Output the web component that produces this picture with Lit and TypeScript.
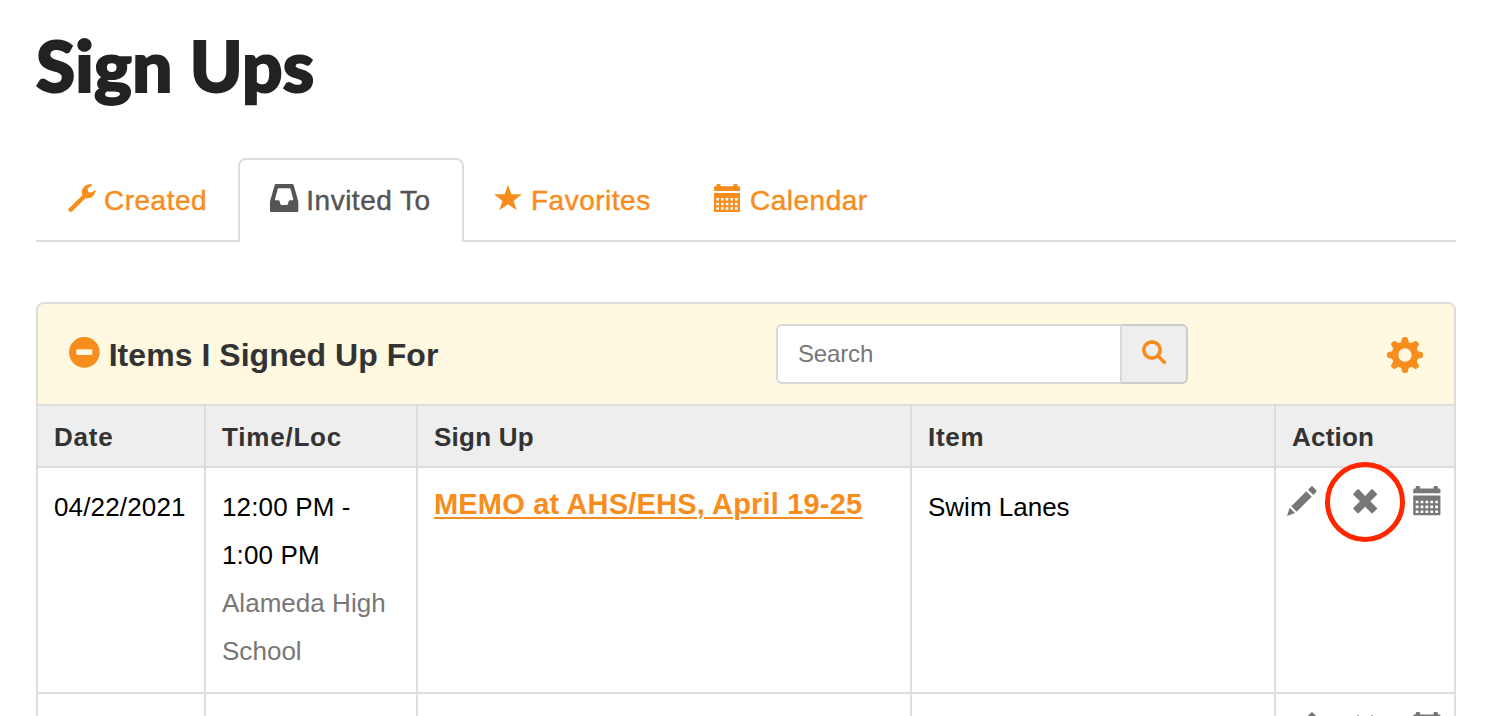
import { LitElement, html, css, svg } from "lit";
import { customElement } from "lit/decorators.js";

const wrench = html`<svg class="wrench" viewBox="0 0 84 84"><path d="M1 75 L43 34 Q38 20 47 10 Q56 0 69 0 Q74 1 71 5 L62 11 Q58 13 59 17 L62 25 Q69 27 73 24 L80 19 Q84 17 83 22 Q80 34 72 39 Q62 45 53 42 L13 82 Q9 86 4 82 Q-2 78 1 75Z"/></svg>`;
const inbox = html`<svg class="inbox" viewBox="0 0 85 84"><path fill-rule="evenodd" d="M18 0H67Q70 0 71 3L84 49Q85 52 85 55V81Q85 84 82 84H3Q0 84 0 81V55Q0 52 1 49L14 3Q15 0 18 0ZM26 13Q24 13 23 16L15 46Q14 49 17 49H25Q28 49 29 52L31 60Q32 63 35 63H50Q53 63 54 60L56 52Q57 49 60 49H68Q71 49 70 46L62 16Q61 13 59 13Z"/></svg>`;
const star = html`<svg class="star" viewBox="0 0 84 76"><path d="M42 0L52 28H84L59 47L68 76L42 58L16 76L25 47L0 28H32Z"/></svg>`;
const cells = [42, 56, 70].flatMap((y) => [7, 21, 35, 49, 63].map((x) => `M${x} ${y}v7.5h8v-7.5z`)).join("");
const calendar = (cls: string) => html`<svg class=${cls} viewBox="0 0 78 84"><path d="M0 21V11Q0 7 4 7H7V4Q7 0 11 0H16Q20 0 20 4V7H58V4Q58 0 62 0H67Q71 0 71 4V7H74Q78 7 78 11V21Z"/><path fill-rule="evenodd" d=${`M0 27H78V81Q78 84 75 84H3Q0 84 0 81Z${cells}`}/></svg>`;
const minus = html`<svg class="minus" viewBox="0 0 92 92"><path fill-rule="evenodd" d="M46 0A46 46 0 1 1 46 92A46 46 0 1 1 46 0ZM24 37Q22 37 22 39V52Q22 54 24 54H68Q70 54 70 52V39Q70 37 68 37Z"/></svg>`;
const magnifier = html`<svg class="magnifier" viewBox="0 0 73 73"><circle cx="30" cy="30" r="24.5"/><path d="M49 49L67 67"/></svg>`;
const teeth = [0, 45, 90, 135, 180, 225, 270, 315].map(
  (a) => svg`<path transform=${`rotate(${a} 54 54)`} d="M37 24Q44 16 46 3Q46 0 54 0Q62 0 62 3Q64 16 71 24Z"/>`
);
const gear = html`<svg class="gear" viewBox="0 0 108 108"><path fill-rule="evenodd" d="M54 14A40 40 0 1 1 54 94A40 40 0 1 1 54 14ZM54 34A20 20 0 1 0 54 74A20 20 0 1 0 54 34Z"/>${teeth}</svg>`;
const pencil = html`<svg class="pencil" viewBox="0 0 89 90"><path d="M0 90L8 65L24 81ZM13 61L58 16L74 32L29 77ZM63 11L71 3Q74 -1 78 2L87 12Q90 16 87 19L79 27Z"/></svg>`;
const cross = html`<svg class="cross" viewBox="0 0 73 74"><path d="M1 14L14 1Q15.500 0 17 1L36.500 21L56 1Q57.500 0 59 1L72 14Q73 16 72 17L52 37L72 57Q73 59 72 60L59 73Q57.500 74 56 73L36.500 53L17 73Q15.500 74 14 73L1 60Q0 58 1 57L21 37L1 17Q0 15 1 14Z"/></svg>`;

interface Row {
  date: string;
  time: string;
  place: string;
  signUp: string;
  item: string;
  marked: boolean;
}

@customElement("app-root")
export class AppRoot extends LitElement {
  rows: Row[] = [
    { date: "04/22/2021", time: "12:00 PM - 1:00 PM", place: "Alameda High School", signUp: "MEMO at AHS/EHS, April 19-25", item: "Swim Lanes", marked: true },
    { date: "", time: "", place: "", signUp: "", item: "", marked: false },
  ];

  static styles = css`
    :host { display: block; height: 716px; overflow: hidden; background: #fff; color: #000; font-family: "Liberation Sans", Arial, sans-serif; }
    * { box-sizing: border-box; }
    svg { display: block; flex: none; fill: currentColor; overflow: visible; }
    .page { padding: 0 30px 0 36px; }
    h1 { margin: 0; height: 158px; padding-top: 20px; font: 900 71px/90px Lato, sans-serif; letter-spacing: .3px; color: #222; white-space: nowrap; -webkit-text-stroke: 2px #222; }
    .tabs { display: flex; height: 84px; border-bottom: 2px solid #ddd; }
    .tab { display: flex; height: 84px; padding-top: 26px; color: #f78d1d; font-size: 28px; line-height: 34px; letter-spacing: .5px; white-space: nowrap; -webkit-text-stroke: .45px currentColor; }
    .tab svg { stroke: none; }
    .created { width: 202px; padding-left: 32px; gap: 8px; }
    .invited { width: 226px; padding: 24px 0 0 30px; gap: 8px; color: #555; background: #fff; border: 2px solid #ddd; border-bottom: 0; border-radius: 8px 8px 0 0; }
    .favorites { width: 218px; padding-left: 30px; gap: 9px; }
    .calendar { padding-left: 32px; gap: 10px; }
    .wrench { width: 28px; height: 28px; }
    .inbox { width: 28.300px; height: 28px; }
    .star { width: 28px; height: 25.300px; margin-top: 1px; }
    .cal { width: 26px; height: 28px; }
    .panel { margin-top: 60px; border: 2px solid #ddd; border-radius: 8px 8px 0 0; overflow: hidden; }
    .bar { display: grid; grid-template-columns: 738px 412px 1fr; height: 100px; background: #fef9e0; color: #f78d1d; }
    .heading { display: flex; padding: 32.500px 0 0 31px; gap: 9px; }
    .minus { width: 30.700px; height: 30.700px; }
    h2 { margin: 0; font-size: 32px; line-height: 37px; letter-spacing: .04px; color: #333; white-space: nowrap; }
    .search { display: flex; margin-top: 20px; width: 412px; height: 60px; }
    .field { width: 344px; padding: 0 20px; border: 2px solid #d9d9dd; border-right: 0; border-radius: 6px 0 0 6px; background: #fff; color: #777; font-size: 24px; line-height: 56px; letter-spacing: -.15px; }
    .go { width: 68px; padding: 14px 0 0 20px; border: 2px solid #ccc; border-left-color: #d9d9dd; border-radius: 0 6px 6px 0; background: #eee; }
    .magnifier { width: 24.300px; height: 24.300px; fill: none; stroke: currentColor; stroke-width: 11; stroke-linecap: round; }
    .options { display: flex; justify-content: flex-end; padding: 33.300px 30.800px 0 0; }
    .gear { width: 36px; height: 36px; }
    .row { display: grid; grid-template-columns: 166px 212px 494px 364px 180px; height: 226px; border-top: 2px solid #ddd; }
    .cell { padding: 15px 16px 17px; border-left: 2px solid #ddd; font-size: 26px; line-height: 48px; letter-spacing: .15px; }
    .cell:first-child { border-left: 0; white-space: nowrap; }
    .head { height: 62px; background: #eee; color: #333; }
    .head .cell { padding: 1px 16px 0; line-height: 60px; font-weight: 700; letter-spacing: .4px; }
    .head .cell:first-child { letter-spacing: .8px; }
    .head .cell:nth-child(2) { letter-spacing: .8px; }
    .head .cell:nth-child(4) { letter-spacing: .7px; }
    .head .cell:nth-child(3) { letter-spacing: .25px; }
    .head .cell:nth-child(5) { letter-spacing: .2px; }
    .cell:nth-child(4) { letter-spacing: 0; }
    .place { color: #777; letter-spacing: .03px; }
    .link { color: #f78d1d; font-size: 29px; font-weight: 700; line-height: 42px; letter-spacing: .18px; text-decoration: underline; text-decoration-thickness: 2px; text-underline-offset: 3px; white-space: nowrap; }
    .link-cell { padding-top: 13px; }
    .cell.actions { position: relative; display: flex; padding: 18px 0 0 11px; color: #777; }
    .pencil { width: 29.700px; height: 30px; }
    .cross { width: 24.300px; height: 24.700px; margin: 2.500px 0 0 36px; }
    .cal-row { width: 27.700px; height: 29.300px; margin-left: 36px; }
    .ring { position: absolute; left: 49.300px; top: -6.500px; width: 80px; height: 80px; border: 5px solid #ff2600; border-radius: 50%; }
  `;

  render() {
    return html`<main class="page">
      <h1>Sign Ups</h1>
      <nav class="tabs">
        <a class="tab created">${wrench}<span>Created</span></a>
        <a class="tab invited">${inbox}<span>Invited To</span></a>
        <a class="tab favorites">${star}<span>Favorites</span></a>
        <a class="tab calendar">${calendar("cal")}<span>Calendar</span></a>
      </nav>
      <section class="panel">
        <header class="bar">
          <div class="heading">${minus}<h2>Items I Signed Up For</h2></div>
          <div class="search"><div class="field">Search</div><div class="go">${magnifier}</div></div>
          <div class="options">${gear}</div>
        </header>
        <div class="row head">
          ${["Date", "Time/Loc", "Sign Up", "Item", "Action"].map((t) => html`<div class="cell">${t}</div>`)}
        </div>
        ${this.rows.map((r) => html`<div class="row">
          <div class="cell">${r.date}</div>
          <div class="cell"><div>${r.time}</div><div class="place">${r.place}</div></div>
          <div class="cell link-cell"><a class="link">${r.signUp}</a></div>
          <div class="cell">${r.item}</div>
          <div class="cell actions">${pencil}${cross}${calendar("cal-row")}${r.marked ? html`<span class="ring"></span>` : ""}</div>
        </div>`)}
      </section>
    </main>`;
  }
}
